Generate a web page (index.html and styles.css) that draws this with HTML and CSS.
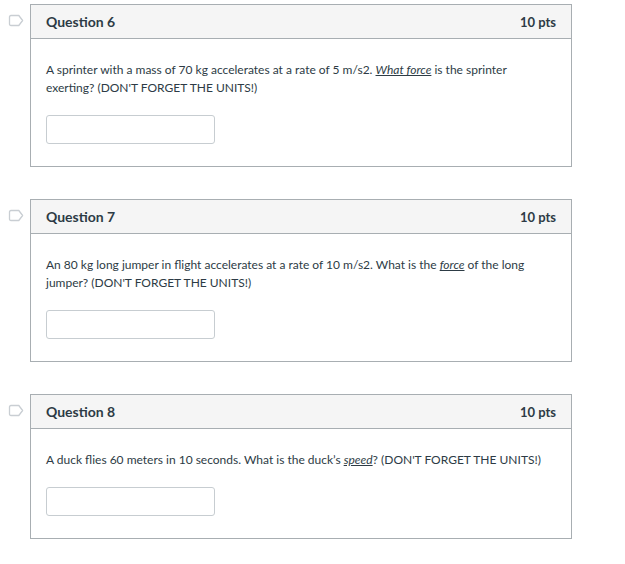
FILE: index.html
```html
<!DOCTYPE html>
<html>
<head>
<meta charset="utf-8">
<link rel="stylesheet" href="styles.css">
</head>
<body>
<div class="quiz">
  <div class="qrow">
    <div class="flag">
      <svg width="16" height="13" viewBox="0 0 16 13"><path d="M3 1.5 H10.8 L14.6 6.5 L10.8 11.5 H3 Q1.5 11.5 1.5 10 V3 Q1.5 1.5 3 1.5 Z" fill="none" stroke="#c9ced3" stroke-width="1.3" stroke-linejoin="round"/></svg>
    </div>
    <div class="card">
      <div class="card-head"><span class="qname">Question 6</span><span class="pts">10 pts</span></div>
      <div class="card-body">
        <p class="qtext">A sprinter with a mass of 70 kg accelerates at a rate of 5 m/s2. <em class="u">What force</em> is the sprinter exerting? (DON'T FORGET THE UNITS!)</p>
        <div class="answer"></div>
      </div>
    </div>
  </div>
  <div class="qrow">
    <div class="flag">
      <svg width="16" height="13" viewBox="0 0 16 13"><path d="M3 1.5 H10.8 L14.6 6.5 L10.8 11.5 H3 Q1.5 11.5 1.5 10 V3 Q1.5 1.5 3 1.5 Z" fill="none" stroke="#c9ced3" stroke-width="1.3" stroke-linejoin="round"/></svg>
    </div>
    <div class="card">
      <div class="card-head"><span class="qname">Question 7</span><span class="pts">10 pts</span></div>
      <div class="card-body">
        <p class="qtext">An 80 kg long jumper in flight accelerates at a rate of 10 m/s2. What is the <em class="u">force</em> of the long jumper? (DON'T FORGET THE UNITS!)</p>
        <div class="answer"></div>
      </div>
    </div>
  </div>
  <div class="qrow">
    <div class="flag">
      <svg width="16" height="13" viewBox="0 0 16 13"><path d="M3 1.5 H10.8 L14.6 6.5 L10.8 11.5 H3 Q1.5 11.5 1.5 10 V3 Q1.5 1.5 3 1.5 Z" fill="none" stroke="#c9ced3" stroke-width="1.3" stroke-linejoin="round"/></svg>
    </div>
    <div class="card">
      <div class="card-head"><span class="qname">Question 8</span><span class="pts">10 pts</span></div>
      <div class="card-body">
        <p class="qtext">A duck flies 60 meters in 10 seconds. What is the duck’s <em class="u">speed</em>? (DON'T FORGET THE UNITS!)</p>
        <div class="answer"></div>
      </div>
    </div>
  </div>
</div>
</body>
</html>
```
FILE: styles.css
```css
html, body {
  margin: 0;
  padding: 0;
  background: #ffffff;
}
body {
  font-family: Lato, "Open Sans", sans-serif;
  color: #2d3b45;
}
.quiz {
  padding-top: 4px;
  display: flex;
  flex-direction: column;
  gap: 32px;
}
.qrow {
  display: flex;
  align-items: flex-start;
}
.flag {
  width: 30px;
  flex: none;
  padding-top: 10px;
  padding-left: 8px;
  box-sizing: border-box;
  height: 30px;
}
.flag svg {
  display: block;
}
.card {
  width: 542px;
  box-sizing: border-box;
  border: 1px solid #a8aeb2;
}
.card-head {
  height: 33px;
  background: #f5f5f5;
  border-bottom: 1px solid #a8aeb2;
  display: flex;
  align-items: center;
  justify-content: space-between;
  padding: 0 15px;
}
.qname {
  font-weight: 700;
  font-size: 14px;
}
.pts {
  font-weight: 700;
  font-size: 13px;
}
.card-body {
  padding: 22px 15px 22px 15px;
}
.qtext {
  margin: 0;
  font-size: 12px;
  line-height: 18px;
}
.u {
  text-decoration: underline;
}
.answer {
  margin-top: 18px;
  width: 169px;
  height: 29px;
  box-sizing: border-box;
  border: 1px solid #c7cdd1;
  border-radius: 3px;
  background: #fff;
}
```
